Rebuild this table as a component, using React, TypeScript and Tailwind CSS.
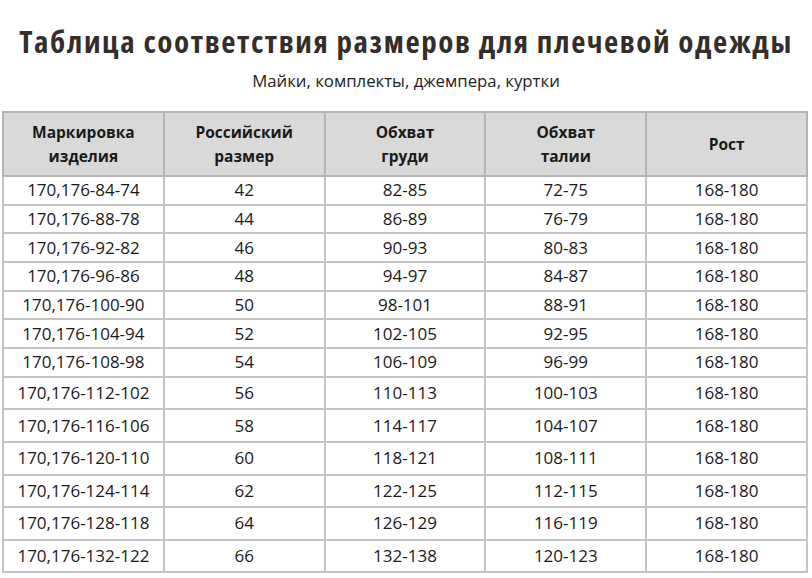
import React from 'react';

const rows: [string, string, string, string, string][] = [
  ['170,176-84-74', '42', '82-85', '72-75', '168-180'],
  ['170,176-88-78', '44', '86-89', '76-79', '168-180'],
  ['170,176-92-82', '46', '90-93', '80-83', '168-180'],
  ['170,176-96-86', '48', '94-97', '84-87', '168-180'],
  ['170,176-100-90', '50', '98-101', '88-91', '168-180'],
  ['170,176-104-94', '52', '102-105', '92-95', '168-180'],
  ['170,176-108-98', '54', '106-109', '96-99', '168-180'],
  ['170,176-112-102', '56', '110-113', '100-103', '168-180'],
  ['170,176-116-106', '58', '114-117', '104-107', '168-180'],
  ['170,176-120-110', '60', '118-121', '108-111', '168-180'],
  ['170,176-124-114', '62', '122-125', '112-115', '168-180'],
  ['170,176-128-118', '64', '126-129', '116-119', '168-180'],
  ['170,176-132-122', '66', '132-138', '120-123', '168-180'],
];

const headers = [
  ['Маркировка', 'изделия'],
  ['Российский', 'размер'],
  ['Обхват', 'груди'],
  ['Обхват', 'талии'],
  ['Рост'],
];

export default function App() {
  return (
    <div className="w-[812px] h-[578px] bg-white font-['Open_Sans',sans-serif] text-[#1a1a1a] overflow-hidden">
      {/* condensed bold face, spaced out to the heading's width */}
      <h1 className="pt-[21px] text-center text-[31px] leading-[40px] font-bold tracking-[1.6px] text-[#342d2a] [font-stretch:75%]">
        Таблица соответствия размеров для плечевой одежды
      </h1>
      <p className="mt-[9px] text-center text-[16.75px] leading-[22px] text-[#222]">
        Майки, комплекты, джемпера, куртки
      </p>
      <table className="mt-[19px] ml-[2px] w-[806px] table-fixed border-collapse text-center">
        <thead>
          <tr className="h-[64px] bg-[#d9d9d9]">
            {headers.map((h, i) => (
              <th key={i} className="border-2 border-[#b4b4b4] text-[15.5px] leading-[24px] font-bold">
                {h.map((l, j) => (
                  <div key={j}>{l}</div>
                ))}
              </th>
            ))}
          </tr>
        </thead>
        <tbody>
          {rows.map((r, i) => (
            <tr key={i} className={i < 7 ? 'h-[28.7px]' : 'h-[32.6px]'}>
              {r.map((c, j) => (
                <td key={j} className="border-2 border-[#c4c4c4] text-[17px] leading-[20px] p-0">
                  {c}
                </td>
              ))}
            </tr>
          ))}
        </tbody>
      </table>
    </div>
  );
}
